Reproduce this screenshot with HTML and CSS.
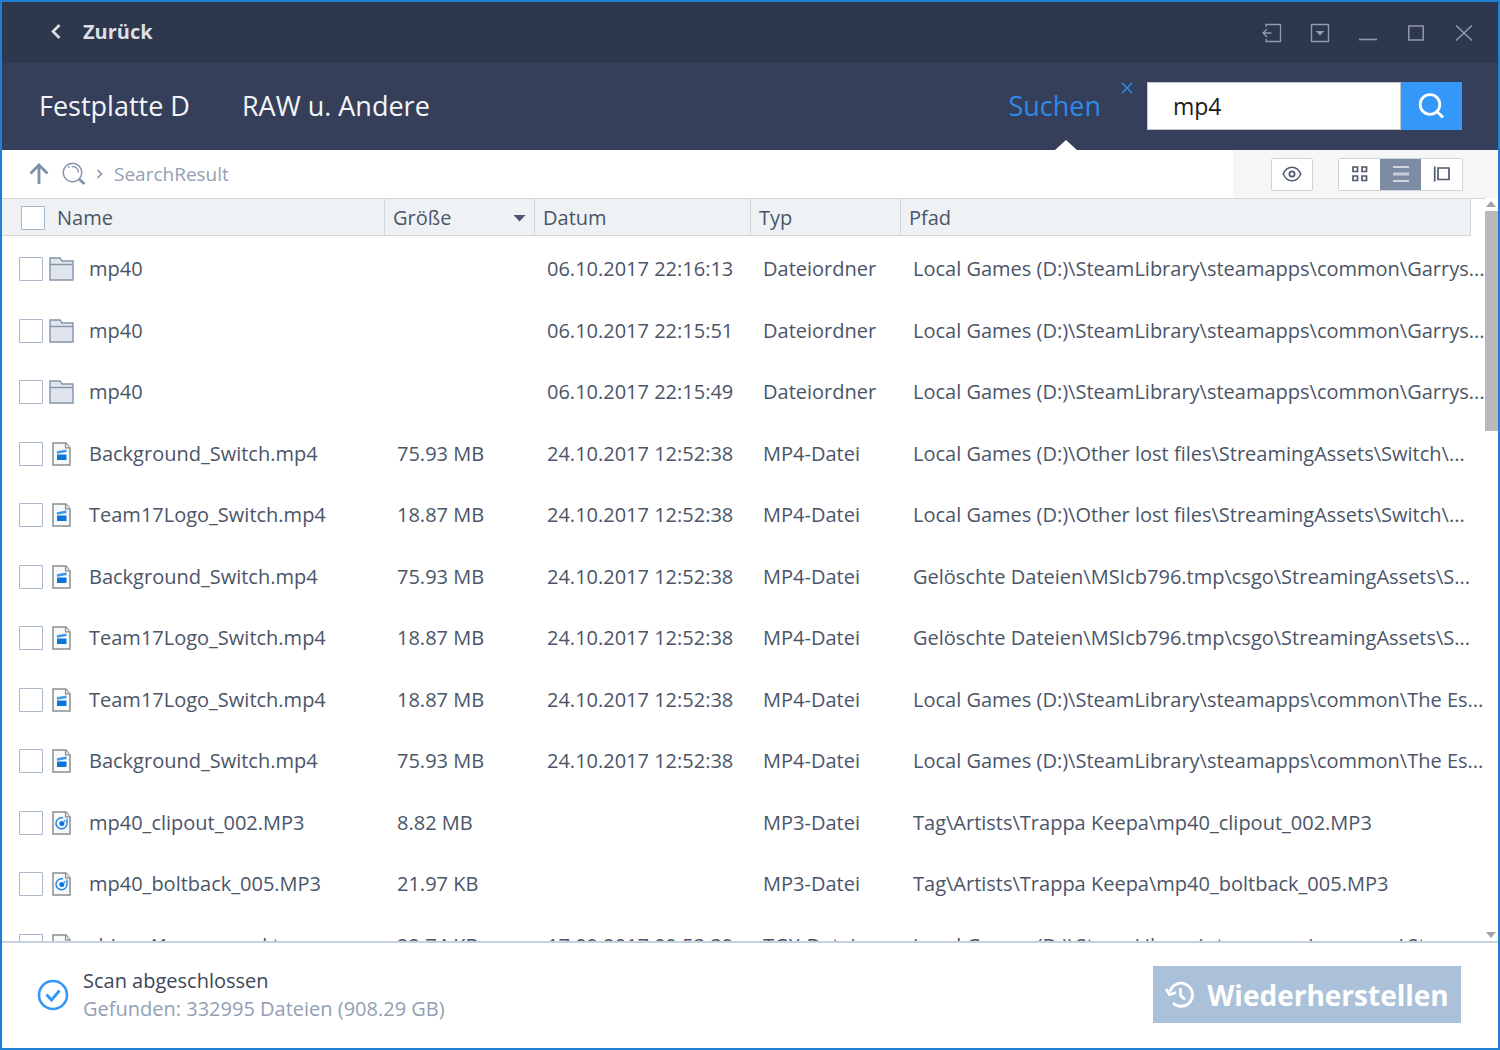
FILE: index.html
```html
<!DOCTYPE html>
<html lang="de">
<head>
<meta charset="utf-8">
<title>Suchergebnis</title>
<link rel="stylesheet" href="styles.css">
</head>
<body>
<svg class="sprite" aria-hidden="true">
  <symbol id="folder" viewBox="0 0 25 24">
    <path d="M1 1h10l2 3h11v19H1z" fill="#dfe4ed" stroke="#8494a8" stroke-width="1.4"/>
    <path d="M1 7.500h23" stroke="#8494a8" stroke-width="1.4"/>
  </symbol>
  <symbol id="page" viewBox="0 0 25 24">
    <path d="M4 1h13l4 5v17H4z" fill="#f8f9fa" stroke="#8b8e90" stroke-width="1.5"/>
    <path d="M16.500 1v4.800h4.500" fill="#e6e7e8" stroke="#8b8e90" stroke-width="1.2"/>
  </symbol>
  <symbol id="video" viewBox="0 0 25 24">
    <use href="#page"/>
    <path d="M8 12.500h9.500V18H8z" fill="#0b76da"/>
    <path d="M8 10.500l9.500-1.800" stroke="#3f97e6" stroke-width="2.600"/>
  </symbol>
  <symbol id="audio" viewBox="0 0 25 24">
    <use href="#page"/>
    <path d="M14 7a5.500 5.500 0 1 0 4 5.500V7.500" fill="none" stroke="#2b8be3" stroke-width="1.500"/>
    <circle cx="12.800" cy="12.500" r="2.500" fill="#0b76da"/>
    <path d="M15 9l1.200 2" fill="none" stroke="#2b8be3" stroke-width="1.200"/>
  </symbol>
</svg>

<div class="window">
  <header class="titlebar">
    <button class="back" type="button">
      <svg width="12" height="18" viewBox="0 0 12 18"><path d="M9.500 2L3 8.500l6.500 6.500" fill="none" stroke="currentColor" stroke-width="2.600"/></svg>
      Zurück
    </button>
    <div class="controls">
      <button type="button" aria-label="Abmelden"><svg width="20" height="20" viewBox="0 0 20 20"><path d="M4 4V1.500h14.500v17H4V16M1 10h8.500M5 6l-4 4 4 4" fill="none" stroke="currentColor" stroke-width="1.300"/></svg></button>
      <button type="button" aria-label="Menü"><svg width="20" height="20" viewBox="0 0 20 20"><path d="M1.500 1.500h17v17h-17z" fill="none" stroke="currentColor" stroke-width="1.400"/><path d="M5.500 8h9L10 12.500z" fill="currentColor"/></svg></button>
      <button type="button" aria-label="Minimieren"><svg width="20" height="20" viewBox="0 0 20 20"><path d="M1 16.500h18" stroke="currentColor" stroke-width="1.600"/></svg></button>
      <button type="button" aria-label="Maximieren"><svg width="20" height="20" viewBox="0 0 20 20"><path d="M2.800 3h14.400v14H2.800z" fill="none" stroke="currentColor" stroke-width="1.500"/></svg></button>
      <button type="button" aria-label="Schließen"><svg width="20" height="20" viewBox="0 0 20 20"><path d="M2 2.500l16 15M18 2.500l-16 15" stroke="currentColor" stroke-width="1.500"/></svg></button>
    </div>
  </header>

  <nav class="tabs">
    <a class="tab" href="#disk">Festplatte D</a>
    <a class="tab" href="#raw">RAW u. Andere</a>
    <div class="search-tab">
      <a class="tab active" href="#search">Suchen</a>
      <button class="close-tab" type="button" aria-label="Suche schließen"><svg width="12" height="12" viewBox="0 0 12 12"><path d="M1 1l10 10M11 1L1 11" stroke="currentColor" stroke-width="1.500"/></svg></button>
    </div>
    <form class="search">
      <input type="text" value="mp4" aria-label="Suchbegriff">
      <button type="button" aria-label="Suchen"><svg width="28" height="28" viewBox="0 0 28 28"><circle cx="12" cy="12.500" r="9.800" fill="none" stroke="currentColor" stroke-width="2.800"/><path d="M19 19.500l6 6" stroke="currentColor" stroke-width="3"/></svg></button>
    </form>
  </nav>

  <div class="toolbar">
    <div class="crumbs">
      <button type="button" aria-label="Nach oben"><svg width="20" height="22" viewBox="0 0 20 22"><path d="M10 21V2.500M1.500 10.500L10 2l8.500 8.500" fill="none" stroke="#7f8fa6" stroke-width="2.800"/></svg></button>
      <svg width="24" height="24" viewBox="0 0 24 24"><circle cx="10.500" cy="10.500" r="9.300" fill="none" stroke="#8595ab" stroke-width="1.500"/><path d="M6 5h1.500M10 4.500a6 6 0 0 1 6.500 6" fill="none" stroke="#8595ab" stroke-width="1.300"/><path d="M17 17l5.500 5" stroke="#8595ab" stroke-width="3"/></svg>
      <svg width="8" height="10" viewBox="0 0 8 10"><path d="M1.500 1l4 4-4 4" fill="none" stroke="#8595ab" stroke-width="1.600"/></svg>
      <a href="#result">SearchResult</a>
    </div>
    <div class="views">
      <button class="preview" type="button" aria-label="Vorschau"><svg width="20" height="20" viewBox="0 0 20 20"><path d="M1.200 10c2-4.500 5-6.800 8.800-6.800s6.800 2.300 8.800 6.800c-2 4.500-5 6.800-8.800 6.800S3.200 14.500 1.200 10z" fill="none" stroke="currentColor" stroke-width="1.500"/><circle cx="10" cy="10" r="2.600" fill="none" stroke="currentColor" stroke-width="1.800"/></svg></button>
      <div class="group">
        <button type="button" aria-label="Symbole"><svg width="18" height="18" viewBox="0 0 18 18"><path d="M2 2h4.500v4.500H2zM11 2h4.500v4.500H11zM11 11h4.500v4.500H11zM2 11h4.500v4.500H2z" fill="none" stroke="currentColor" stroke-width="1.700"/></svg></button>
        <button class="selected" type="button" aria-label="Liste"><svg width="18" height="18" viewBox="0 0 18 18"><path d="M1 2h16M1 16h16" stroke="#edf0f4" stroke-width="1.500"/><path d="M1 9h16" stroke="#c6ced8" stroke-width="3"/></svg></button>
        <button type="button" aria-label="Galerie"><svg width="18" height="18" viewBox="0 0 18 18"><path d="M1.700 1.500v15M5 3h11v11.500H5z" fill="none" stroke="currentColor" stroke-width="1.700"/></svg></button>
      </div>
    </div>
  </div>

  <main class="content">
    <div class="list">
      <table>
        <colgroup><col class="c-name"><col class="c-size"><col class="c-date"><col class="c-type"><col></colgroup>
        <thead>
          <tr>
            <th><label class="all"><input type="checkbox">Name</label></th>
            <th><div class="sorted">Größe<svg width="13" height="8" viewBox="0 0 13 8"><path d="M0.500 1h12l-6 6.500z" fill="#4b586e"/></svg></div></th>
            <th>Datum</th><th>Typ</th><th>Pfad</th>
          </tr>
        </thead>
        <tbody>
          <tr><td><label class="file"><input type="checkbox"><svg><use href="#folder"/></svg><span>mp40</span></label></td><td></td><td>06.10.2017 22:16:13</td><td>Dateiordner</td><td>Local Games (D:)\SteamLibrary\steamapps\common\Garrys...</td></tr>
          <tr><td><label class="file"><input type="checkbox"><svg><use href="#folder"/></svg><span>mp40</span></label></td><td></td><td>06.10.2017 22:15:51</td><td>Dateiordner</td><td>Local Games (D:)\SteamLibrary\steamapps\common\Garrys...</td></tr>
          <tr><td><label class="file"><input type="checkbox"><svg><use href="#folder"/></svg><span>mp40</span></label></td><td></td><td>06.10.2017 22:15:49</td><td>Dateiordner</td><td>Local Games (D:)\SteamLibrary\steamapps\common\Garrys...</td></tr>
          <tr><td><label class="file"><input type="checkbox"><svg><use href="#video"/></svg><span>Background_Switch.mp4</span></label></td><td>75.93 MB</td><td>24.10.2017 12:52:38</td><td>MP4-Datei</td><td>Local Games (D:)\Other lost files\StreamingAssets\Switch\...</td></tr>
          <tr><td><label class="file"><input type="checkbox"><svg><use href="#video"/></svg><span>Team17Logo_Switch.mp4</span></label></td><td>18.87 MB</td><td>24.10.2017 12:52:38</td><td>MP4-Datei</td><td>Local Games (D:)\Other lost files\StreamingAssets\Switch\...</td></tr>
          <tr><td><label class="file"><input type="checkbox"><svg><use href="#video"/></svg><span>Background_Switch.mp4</span></label></td><td>75.93 MB</td><td>24.10.2017 12:52:38</td><td>MP4-Datei</td><td>Gelöschte Dateien\MSIcb796.tmp\csgo\StreamingAssets\S...</td></tr>
          <tr><td><label class="file"><input type="checkbox"><svg><use href="#video"/></svg><span>Team17Logo_Switch.mp4</span></label></td><td>18.87 MB</td><td>24.10.2017 12:52:38</td><td>MP4-Datei</td><td>Gelöschte Dateien\MSIcb796.tmp\csgo\StreamingAssets\S...</td></tr>
          <tr><td><label class="file"><input type="checkbox"><svg><use href="#video"/></svg><span>Team17Logo_Switch.mp4</span></label></td><td>18.87 MB</td><td>24.10.2017 12:52:38</td><td>MP4-Datei</td><td>Local Games (D:)\SteamLibrary\steamapps\common\The Es...</td></tr>
          <tr><td><label class="file"><input type="checkbox"><svg><use href="#video"/></svg><span>Background_Switch.mp4</span></label></td><td>75.93 MB</td><td>24.10.2017 12:52:38</td><td>MP4-Datei</td><td>Local Games (D:)\SteamLibrary\steamapps\common\The Es...</td></tr>
          <tr><td><label class="file"><input type="checkbox"><svg><use href="#audio"/></svg><span>mp40_clipout_002.MP3</span></label></td><td>8.82 MB</td><td></td><td>MP3-Datei</td><td>Tag\Artists\Trappa Keepa\mp40_clipout_002.MP3</td></tr>
          <tr><td><label class="file"><input type="checkbox"><svg><use href="#audio"/></svg><span>mp40_boltback_005.MP3</span></label></td><td>21.97 KB</td><td></td><td>MP3-Datei</td><td>Tag\Artists\Trappa Keepa\mp40_boltback_005.MP3</td></tr>
          <tr><td><label class="file"><input type="checkbox"><svg><use href="#page"/></svg><span>chips_41_approved.tgx</span></label></td><td>22.74 KB</td><td>17.09.2017 09:53:39</td><td>TGX-Datei</td><td>Local Games (D:)\SteamLibrary\steamapps\common\Stro...</td></tr>
        </tbody>
      </table>
    </div>
    <div class="scrollbar">
      <svg width="12" height="13" viewBox="0 0 12 13"><path d="M1 9l5-6 5 6z" fill="#a3a3a3"/></svg>
      <div class="thumb"></div>
      <svg width="12" height="13" viewBox="0 0 12 13"><path d="M1 4l5 6 5-6z" fill="#a3a3a3"/></svg>
    </div>
  </main>

  <footer class="status">
    <svg width="32" height="32" viewBox="0 0 32 32"><circle cx="16" cy="16" r="14" fill="none" stroke="#3596f8" stroke-width="2.600"/><path d="M9.500 15.500l5 5.500 8-9.500" fill="none" stroke="#3596f8" stroke-width="2.800"/></svg>
    <div class="message">
      <div>Scan abgeschlossen</div>
      <div class="found">Gefunden: 332995 Dateien (908.29 GB)</div>
    </div>
    <button class="recover" type="button">
      <svg width="30" height="28" viewBox="0 0 30 28"><path d="M5 10.500A11.500 11.500 0 1 1 8 22" fill="none" stroke="currentColor" stroke-width="2.800"/><path d="M1 8l3.500 5.500L11 11.500" fill="none" stroke="currentColor" stroke-width="2.800"/><path d="M15.500 7v7.500l4.500 4" fill="none" stroke="currentColor" stroke-width="2.600"/></svg>
      Wiederherstellen
    </button>
  </footer>
</div>
</body>
</html>
```

FILE: styles.css
```css
* { box-sizing: border-box; }

body {
  margin: 0;
  background: #fff;
  color: #4b5568;
  font: 20px/28px "Open Sans", "Noto Sans", sans-serif;
}

button, input { font: inherit; }

button {
  display: flex;
  align-items: center;
  justify-content: center;
  padding: 0;
  border: 0;
  background: none;
  color: inherit;
}

a { color: inherit; text-decoration: none; }
svg { display: block; flex: none; }
.sprite { position: absolute; width: 0; height: 0; }

.window {
  display: flex;
  flex-direction: column;
  height: 100vh;
  border: 2px solid #1f7fd2;
}

.titlebar {
  display: flex;
  align-items: center;
  justify-content: space-between;
  height: 61px;
  padding: 0 10px 0 48px;
  background: #2d374e;
}

.back { gap: 21px; padding-bottom: 2px; color: #dcdfe4; font-weight: 700; }
.controls { display: flex; color: #949ba8; }
.controls button { width: 48px; height: 48px; }

.tabs {
  display: flex;
  align-items: center;
  gap: 52px;
  height: 87px;
  padding: 0 36px 2px 37px;
  background: #353f5a;
}

.tab { color: #f3f5f8; font-size: 27px; line-height: 36px; white-space: nowrap; }
.tab.active { color: #2f8ae6; }

.search-tab {
  position: relative;
  display: flex;
  align-items: center;
  gap: 20px;
  height: 100%;
  margin-left: auto;
  padding-left: 10px;
}

.search-tab::after {
  content: "";
  position: absolute;
  bottom: -2px;
  left: 50%;
  margin-left: -11px;
  border: solid transparent;
  border-width: 0 11px 10px;
  border-bottom-color: #fff;
}

.close-tab { align-self: flex-start; margin-top: 19px; color: #2f8ae6; }

.search { display: flex; height: 48px; margin-left: -38px; }
.search input {
  width: 254px;
  padding: 0 25px;
  border: 1px solid #c3c7ce;
  border-radius: 0;
  background: #fff;
  color: #1c1c1c;
  font-size: 23px;
}
.search button { width: 61px; background: #3497fa; color: #fff; }

.toolbar {
  display: flex;
  justify-content: space-between;
  height: 48px;
}

.crumbs {
  display: flex;
  align-items: center;
  gap: 10px;
  padding-left: 27px;
  color: #93a0b4;
  font-size: 19px;
}
.crumbs button { margin-right: 3px; }

.views {
  display: flex;
  align-items: center;
  gap: 25px;
  padding: 0 35px 0 38px;
  background: #f6f6f7;
}
.views button { width: 41px; height: 31px; background: #fff; color: #4f5a6e; }
.views .preview { width: 42px; height: 33px; }
.preview, .group { border: 1px solid #cfd4de; border-radius: 2px; }
.views .preview { border: 1px solid #cfd4de; }
.group { display: flex; }
.views .selected { background: #7c8ca2; }

.content { display: flex; flex: 1; min-height: 0; }
.list {
  flex: 1;
  min-width: 0;
  padding-right: 14px;
  overflow: hidden;
  border-top: 1px solid #d2d6da;
}

table { width: 100%; border-collapse: separate; border-spacing: 0; table-layout: fixed; }
.c-name { width: 383px; }
.c-size { width: 150px; }
.c-date { width: 216px; }
.c-type { width: 150px; }

th, td { text-align: left; white-space: nowrap; }
th {
  height: 37px;
  padding: 2px 8px 0;
  border: solid #d2d6da;
  border-width: 0 1px 1px 0;
  background: #eef2f5;
  font-weight: 400;
}
th:first-child { padding-left: 19px; }

tbody::before { content: ""; display: table-row; height: 2px; }
td { height: 62px; padding: 0 0 0 12px; }
tr:nth-child(even) td { height: 61px; }
td:first-child { padding-left: 17px; }

.all, .file, .sorted { display: flex; align-items: center; }
.all { gap: 12px; }
.sorted { justify-content: space-between; }
.file svg { width: 25px; height: 24px; margin: 0 15px 0 6px; }

input[type="checkbox"] {
  appearance: none;
  flex: none;
  width: 24px;
  height: 24px;
  margin: 0;
  border: 1px solid #a9b7cc;
  border-radius: 1px;
  background: #fff;
}

.scrollbar { display: flex; flex-direction: column; width: 13px; }
.scrollbar svg:last-child { margin-top: auto; }
.thumb { height: 220px; background: #b9b9b9; }

.status {
  display: flex;
  align-items: center;
  gap: 14px;
  height: 107px;
  padding: 0 37px 2px 35px;
  border-top: 2px solid #c8d2de;
}
.message { flex: 1; color: #3d4759; }
.found { color: #93a0b4; }
.recover {
  gap: 12px;
  width: 308px;
  height: 57px;
  background: #abc1d9;
  color: #fff;
  font-size: 28px;
  font-weight: 700;
}
```
